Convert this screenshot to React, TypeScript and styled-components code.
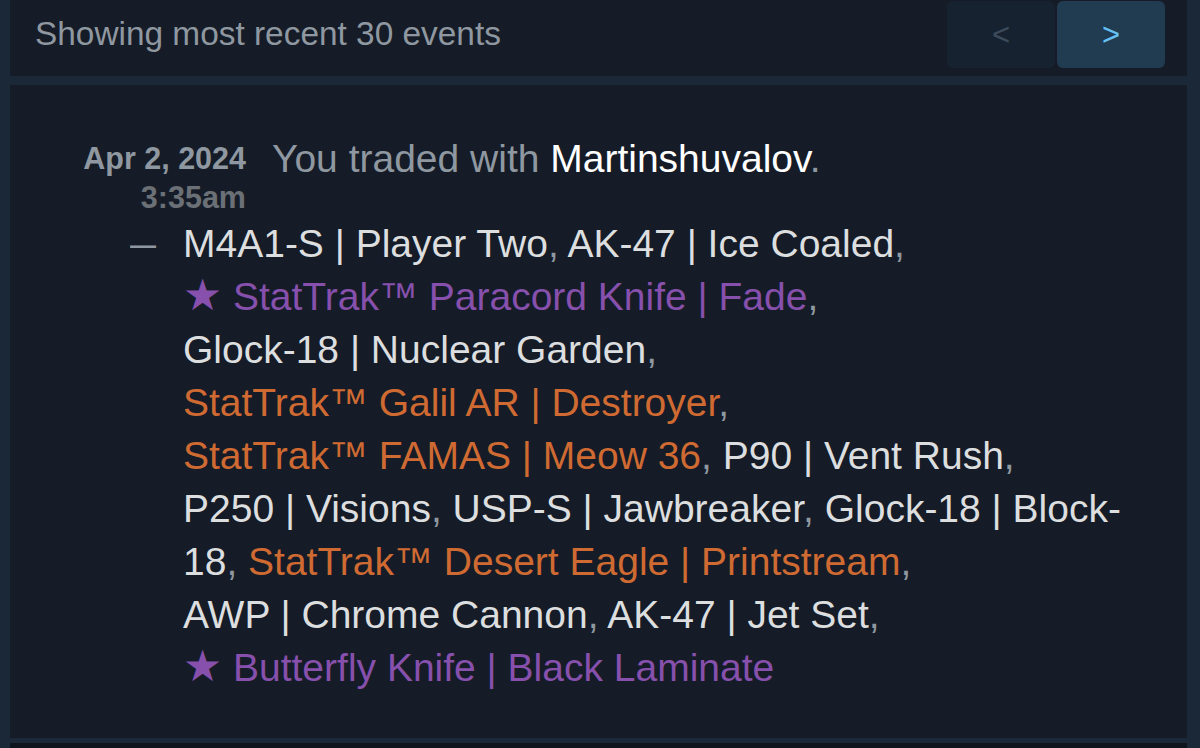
import { FC } from 'react'
import styled, { createGlobalStyle } from 'styled-components'

const GlobalStyle = createGlobalStyle`
  html, body {
    margin: 0;
    padding: 0;
    background: #1b2838;
    font-family: "Liberation Sans", Arial, "DejaVu Sans", sans-serif;
  }
`

const Page = styled.div`
  width: 1200px;
  height: 748px;
  overflow: hidden;
  box-sizing: border-box;
  padding: 0 13px 0 10px;
  display: flex;
  flex-direction: column;
  gap: 9px;
`

const Toolbar = styled.div`
  height: 76px;
  flex: none;
  background: #151c27;
  display: flex;
  align-items: flex-start;
  justify-content: space-between;
  padding: 0 22px 0 25px;
  box-sizing: border-box;
`

const Caption = styled.div`
  color: #8f98a0;
  font-size: 33.4px;
  line-height: 68px;
`

const Pager = styled.div`
  display: flex;
  gap: 2px;
  padding-top: 1px;
`

const PageButton = styled.button<{ $active?: boolean }>`
  width: 108px;
  height: 67px;
  border: none;
  border-radius: 6px;
  background: ${p => (p.$active ? '#213c51' : '#172230')};
  color: ${p => (p.$active ? '#66c0f4' : '#3b4b5c')};
  font-family: "Liberation Sans", Arial, sans-serif;
  font-size: 31px;
  padding: 0;
  cursor: pointer;
`

const Panel = styled.section`
  height: 653px;
  flex: none;
  background: #151c27;
  box-sizing: border-box;
  padding-top: 54px;
`

const Footer = styled.div`
  flex: 1;
  margin-top: -4px;
  background: #0f151d;
`

const EventHead = styled.div`
  display: flex;
  gap: 26px;
`

const DateCol = styled.div`
  width: 236px;
  text-align: right;
  font-weight: bold;
  font-size: 30.5px;
  line-height: 39px;
  color: #8f98a0;
`

const Time = styled.div`
  color: #6b7076;
`

const Message = styled.div`
  font-size: 39px;
  line-height: 40px;
  color: #8f98a0;
`

const Partner = styled.span`
  color: #ffffff;
`

const ItemsRow = styled.div`
  display: flex;
  padding-left: 120px;
`

const Dash = styled.div`
  width: 53px;
  flex: none;
  font-size: 39px;
  line-height: 53px;
  color: #8f98a0;
  transform: scaleX(1.2);
  transform-origin: left center;
`

const ItemLines = styled.div`
  font-size: 39px;
  line-height: 53px;
`

const Line = styled.div`
  white-space: nowrap;
`

type Tone = 'plain' | 'stattrak' | 'knife' | 'sep'

const toneColors: Record<Tone, string> = {
  plain: '#dcdedf',
  stattrak: '#cf6a32',
  knife: '#8650ac',
  sep: '#8f98a0',
}

const Seg = styled.span<{ $tone: Tone }>`
  color: ${p => toneColors[p.$tone]};
`

const Star = styled.span`
  font-size: 1.12em;
  line-height: 0;
`

type Segment = [string, Tone]

const lines: Segment[][] = [
  [['M4A1-S | Player Two', 'plain'], [', ', 'sep'], ['AK-47 | Ice Coaled', 'plain'], [',', 'sep']],
  [['★ StatTrak™ Paracord Knife | Fade', 'knife'], [',', 'sep']],
  [['Glock-18 | Nuclear Garden', 'plain'], [',', 'sep']],
  [['StatTrak™ Galil AR | Destroyer', 'stattrak'], [',', 'sep']],
  [['StatTrak™ FAMAS | Meow 36', 'stattrak'], [', ', 'sep'], ['P90 | Vent Rush', 'plain'], [',', 'sep']],
  [
    ['P250 | Visions', 'plain'],
    [', ', 'sep'],
    ['USP-S | Jawbreaker', 'plain'],
    [', ', 'sep'],
    ['Glock-18 | Block-', 'plain'],
  ],
  [['18', 'plain'], [', ', 'sep'], ['StatTrak™ Desert Eagle | Printstream', 'stattrak'], [',', 'sep']],
  [['AWP | Chrome Cannon', 'plain'], [', ', 'sep'], ['AK-47 | Jet Set', 'plain'], [',', 'sep']],
  [['★ Butterfly Knife | Black Laminate', 'knife']],
]

const renderText = (text: string) =>
  text.startsWith('★ ') ? (
    <>
      <Star>★</Star>
      {text.slice(1)}
    </>
  ) : (
    text
  )

const App: FC = () => {
  return (
    <>
      <GlobalStyle />
      <Page>
        <Toolbar>
          <Caption>Showing most recent 30 events</Caption>
          <Pager>
            <PageButton>&lt;</PageButton>
            <PageButton $active>&gt;</PageButton>
          </Pager>
        </Toolbar>
        <Panel>
          <EventHead>
            <DateCol>
              Apr 2, 2024
              <Time>3:35am</Time>
            </DateCol>
            <Message>
              You traded with <Partner>Martinshuvalov</Partner>.
            </Message>
          </EventHead>
          <ItemsRow>
            <Dash>–</Dash>
            <ItemLines>
              {lines.map((line, i) => (
                <Line key={i}>
                  {line.map(([text, tone], j) => (
                    <Seg key={j} $tone={tone}>
                      {renderText(text)}
                    </Seg>
                  ))}
                </Line>
              ))}
            </ItemLines>
          </ItemsRow>
        </Panel>
        <Footer />
      </Page>
    </>
  )
}

export default App
